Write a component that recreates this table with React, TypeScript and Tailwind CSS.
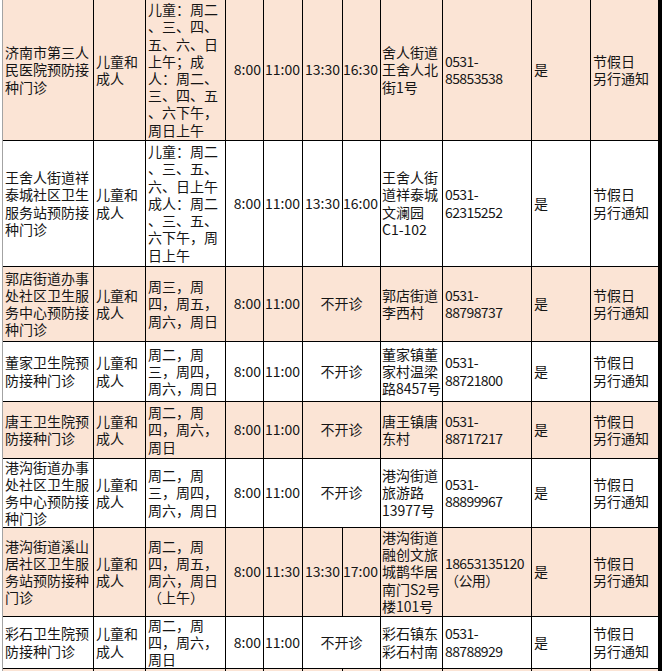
type Clinic = {
  name: string[]
  days: string[]
  am: [string, string]
  pm?: [string, string]
  addr: string[]
  phone: string[]
}

const clinics: Clinic[] = [
  {
    name: ['济南市第三人', '民医院预防接', '种门诊'],
    days: ['儿童：周二', '、三、四、', '五、六、日', '上午；成', '人：周二、', '三、四、五', '、六下午，', '周日上午'],
    am: ['8:00', '11:00'],
    pm: ['13:30', '16:30'],
    addr: ['舍人街道', '王舍人北', '街1号'],
    phone: ['0531-', '85853538'],
  },
  {
    name: ['王舍人街道祥', '泰城社区卫生', '服务站预防接', '种门诊'],
    days: ['儿童：周二', '、三、五、', '六、日上午', '成人：周二', '、三、五、', '六下午，周', '日上午'],
    am: ['8:00', '11:00'],
    pm: ['13:30', '16:00'],
    addr: ['王舍人街', '道祥泰城', '文澜园', 'C1-102'],
    phone: ['0531-', '62315252'],
  },
  {
    name: ['郭店街道办事', '处社区卫生服', '务中心预防接', '种门诊'],
    days: ['周三，周', '四，周五，', '周六，周日'],
    am: ['8:00', '11:00'],
    addr: ['郭店街道', '李西村'],
    phone: ['0531-', '88798737'],
  },
  {
    name: ['董家卫生院预', '防接种门诊'],
    days: ['周二，周', '三，周四，', '周六，周日'],
    am: ['8:00', '11:00'],
    addr: ['董家镇董', '家村温梁', '路8457号'],
    phone: ['0531-', '88721800'],
  },
  {
    name: ['唐王卫生院预', '防接种门诊'],
    days: ['周二，周', '四，周六，', '周日'],
    am: ['8:00', '11:00'],
    addr: ['唐王镇唐', '东村'],
    phone: ['0531-', '88717217'],
  },
  {
    name: ['港沟街道办事', '处社区卫生服', '务中心预防接', '种门诊'],
    days: ['周二，周', '三，周四，', '周六，周日'],
    am: ['8:00', '11:00'],
    addr: ['港沟街道', '旅游路', '13977号'],
    phone: ['0531-', '88899967'],
  },
  {
    name: ['港沟街道溪山', '居社区卫生服', '务站预防接种', '门诊'],
    days: ['周二，周', '四，周五，', '周六，周日', '（上午）'],
    am: ['8:00', '11:30'],
    pm: ['13:30', '17:00'],
    addr: ['港沟街道', '融创文旅', '城鹊华居', '南门S2号', '楼101号'],
    phone: ['18653135120', '（公用）'],
  },
  {
    name: ['彩石卫生院预', '防接种门诊'],
    days: ['周二，周', '四，周六，', '周日'],
    am: ['8:00', '11:00'],
    addr: ['彩石镇东', '彩石村南'],
    phone: ['0531-', '88788929'],
  },
]

function Cell({ lines, peach, className = '' }: { lines: string[]; peach: boolean; className?: string }) {
  return (
    <div className={`flex flex-col justify-center overflow-hidden ${peach ? 'bg-[#fbe4d5]' : 'bg-white'} ${className}`}>
      {lines.map((l, i) => (
        <div key={i} className="whitespace-nowrap">
          {l}
        </div>
      ))}
    </div>
  )
}

export default function App() {
  return (
    <div className="h-[671px] w-[662px] overflow-hidden bg-white pl-[2px] font-['Noto_Sans_CJK_SC',sans-serif] text-[14px] leading-[17.2px] text-[#151515]">
      <div className="grid grid-cols-[90px_51px_79px_37px_38px_39px_37px_61px_88px_58px_67px] grid-rows-[140px_125px_74px_59px_56px_68px_88px_51px_20px] gap-px border-l border-[#a3a3a3] bg-black pr-px">
        {clinics.map((c, i) => {
          const peach = i % 2 === 0
          return [
            <Cell key={`${i}-name`} lines={c.name} peach={peach} className="pl-[2px]" />,
            <Cell key={`${i}-who`} lines={['儿童和', '成人']} peach={peach} className="pl-[2px]" />,
            <Cell key={`${i}-days`} lines={c.days} peach={peach} className="pl-[2px]" />,
            <Cell key={`${i}-a1`} lines={[c.am[0]]} peach={peach} className="items-end pr-[2px]" />,
            <Cell key={`${i}-a2`} lines={[c.am[1]]} peach={peach} className="items-end pr-[2px]" />,
            c.pm ? (
              <Cell key={`${i}-p1`} lines={[c.pm[0]]} peach={peach} className="items-end pr-[2px]" />
            ) : (
              <Cell key={`${i}-closed`} lines={['不开诊']} peach={peach} className="col-span-2 items-center" />
            ),
            c.pm ? <Cell key={`${i}-p2`} lines={[c.pm[1]]} peach={peach} className="items-end pr-[2px]" /> : null,
            <Cell key={`${i}-addr`} lines={c.addr} peach={peach} className="pl-[1px]" />,
            <Cell key={`${i}-phone`} lines={c.phone} peach={peach} className="pl-[2px] tracking-[-0.6px]" />,
            <Cell key={`${i}-yes`} lines={['是']} peach={peach} className="pl-[2px]" />,
            <Cell key={`${i}-note`} lines={['节假日', '另行通知']} peach={peach} className="pl-[2px]" />,
          ]
        })}
        {Array.from({ length: 11 }).map((_, i) => (
          <div key={`tail-${i}`} className="bg-[#fbe4d5]" />
        ))}
      </div>
    </div>
  )
}
